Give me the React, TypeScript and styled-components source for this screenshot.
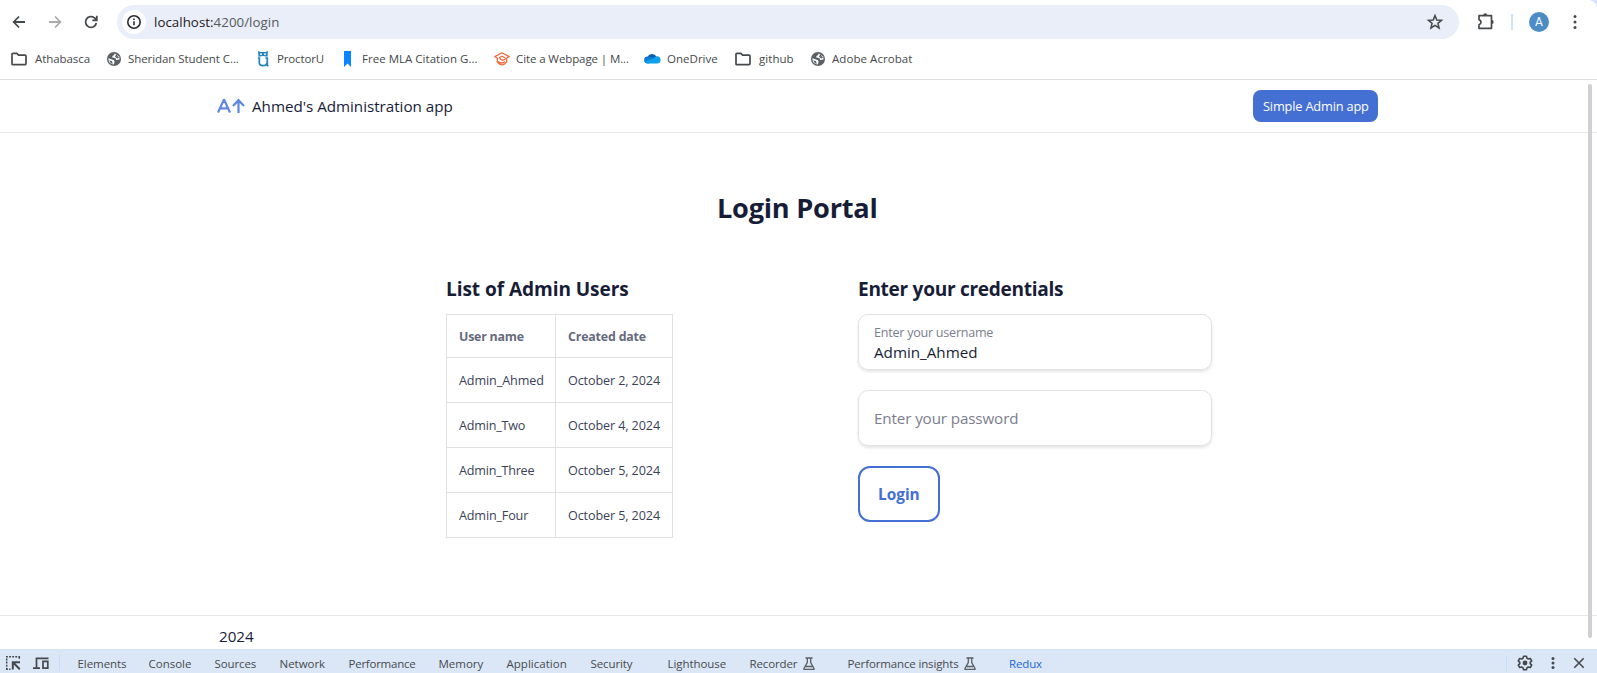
import React from "react";
import styled, { createGlobalStyle } from "styled-components";

const Global = createGlobalStyle`
  *, *::before, *::after { box-sizing: border-box; }
  body { margin: 0; background: #fff; font-family: "Open Sans", "Noto Sans", sans-serif; color: #181d37; overflow: hidden; }
  button { font: inherit; margin: 0; }
`;

const Screen = styled.div`
  width: 1597px;
  height: 673px;
  display: flex;
  flex-direction: column;
  overflow: hidden;
  background: #fff;
`;

/* Text set to a known measure: width plus tracking */
const Text = styled.span<{ $w: number; $size: number; $ls?: number; $bold?: boolean; $color?: string }>`
  display: block;
  flex: none;
  width: ${(p) => p.$w}px;
  font-size: ${(p) => p.$size}px;
  letter-spacing: ${(p) => p.$ls ?? 0}px;
  font-weight: ${(p) => (p.$bold ? 700 : 400)};
  color: ${(p) => p.$color ?? "inherit"};
  white-space: nowrap;
`;

/* ---------- browser toolbar ---------- */
const Toolbar = styled.div`
  position: relative;
  flex: none;
  height: 44px;
  display: flex;
  align-items: center;
  padding: 0 12px 0 9px;
  background: #fff;
`;
const Corner = styled.svg`
  position: absolute;
  top: 0;
  right: 0;
`;
const NavIcons = styled.div`
  display: flex;
  gap: 16px;
  width: 108px;
  svg { display: block; flex: none; }
`;
const Omnibox = styled.div`
  flex: none;
  width: 1342px;
  height: 34px;
  border-radius: 17px;
  background: #e9eef8;
  display: flex;
  align-items: center;
  padding: 0 14px 0 5px;
  line-height: 20px;
  b { font-weight: 400; color: #1f2023; }
`;
const InfoChip = styled.div`
  width: 24px;
  height: 24px;
  border-radius: 50%;
  background: #fff;
  display: grid;
  place-items: center;
  margin-right: 8px;
`;
const Grow = styled.div`
  flex: 1;
`;
const ToolbarEnd = styled.div`
  display: flex;
  align-items: center;
  flex: none;
  padding-left: 17px;
  svg { flex: none; }
`;
const ToolbarRule = styled.i`
  width: 2px;
  height: 16px;
  margin: 0 16px 0 15px;
  background: #cfe2fc;
`;
const Avatar = styled.div`
  width: 20px;
  height: 20px;
  border-radius: 50%;
  background: #4e8cc6;
  color: #fff;
  font: 400 12px/20px Roboto, sans-serif;
  text-align: center;
  margin-right: 18px;
`;

/* ---------- bookmarks ---------- */
const Bookmarks = styled.div`
  flex: none;
  height: 36px;
  display: flex;
  gap: 16px;
  padding: 1px 0 7px 11px;
  border-bottom: 1px solid #dedfe0;
  color: #45484b;
  line-height: 28px;
`;
const Bookmark = styled.div<{ $gap: number }>`
  display: flex;
  align-items: center;
  gap: ${(p) => p.$gap}px;
  svg { flex: none; }
`;

/* ---------- page ---------- */
const Page = styled.div`
  position: relative;
  flex: 1;
  display: flex;
  flex-direction: column;
  min-height: 0;
`;
const ScrollThumb = styled.div`
  position: absolute;
  top: 4px;
  right: 5px;
  width: 4px;
  height: 554px;
  border-radius: 2px;
  background: #cfcfd5;
`;
const Header = styled.header`
  flex: none;
  height: 53px;
  display: flex;
  align-items: center;
  justify-content: space-between;
  padding: 0 219px 0 217px;
  border-bottom: 1px solid #e8e8ea;
`;
const Brand = styled.div`
  display: flex;
  align-items: center;
  gap: 7px;
`;
const PrimaryButton = styled.button`
  width: 125px;
  height: 32px;
  padding: 0 0 0 10px;
  border: 0;
  border-radius: 8px;
  background: #446fd3;
  color: #fff;
  text-align: left;
`;
const Main = styled.main`
  flex: none;
  height: 482px;
  padding-top: 55px;
`;
const Title = styled.h1`
  margin: 0 0 44px 717px;
  line-height: 40px;
`;
const Columns = styled.div`
  display: flex;
  padding-left: 446px;
`;
const Column = styled.section<{ $w: number }>`
  width: ${(p) => p.$w}px;
  flex: none;
`;
const SectionTitle = styled.h2`
  margin: 0 0 8px;
  line-height: 34px;
`;
const Table = styled.table`
  border-collapse: collapse;
  table-layout: fixed;
  width: 227px;
  color: #3b3f57;
  th, td {
    height: 45px;
    border: 1px solid #e0e0e2;
    padding: 2px 0 0 12px;
    text-align: left;
    line-height: 20px;
  }
  th { height: 43px; color: #666a7c; }
`;
const Field = styled.label`
  display: flex;
  flex-direction: column;
  justify-content: center;
  width: 354px;
  height: 56px;
  margin-bottom: 20px;
  padding: 0 15px;
  border: 1px solid #e2e2e4;
  border-radius: 10px;
  box-shadow: 0 2px 3px rgba(0, 0, 0, 0.1);
  line-height: 20px;
`;
const FloatingLabel = styled.div`
  padding-top: 1px;
  height: 20px;
`;
const OutlineButton = styled.button`
  width: 82px;
  height: 56px;
  padding: 1px 0 0 18px;
  border: 2px solid #446fd3;
  border-radius: 12px;
  background: #fff;
  color: #446fd3;
  text-align: left;
`;
const Footer = styled.footer`
  flex: none;
  height: 35px;
  padding: 10px 0 0 219px;
  border-top: 1px solid #e8e8ea;
  line-height: 20px;
`;

/* ---------- devtools ---------- */
const DevTools = styled.div`
  flex: none;
  height: 24px;
  display: flex;
  align-items: flex-start;
  background: #dbe7f6;
  border-top: 1px solid #d0e1f8;
  padding-left: 5px;
  line-height: 27px;
  color: #474a4d;
`;
const DevIcon = styled.svg<{ $top?: number; $right?: number }>`
  flex: none;
  display: block;
  margin-top: ${(p) => p.$top ?? 5}px;
  margin-right: ${(p) => p.$right ?? 0}px;
`;
const DevRule = styled.i<{ $r: number }>`
  width: 1px;
  height: 16px;
  margin: 5px ${(p) => p.$r}px 0 0;
  background: #c7dcf8;
`;
const Tab = styled.div<{ $gap: number }>`
  display: flex;
  gap: 5px;
  margin-right: ${(p) => p.$gap}px;
`;

const ink = "#46494c";

const FolderIcon = () => (
  <svg width="16" height="14" viewBox="0 0 16 14" fill="none" stroke={ink} strokeWidth="1.7" strokeLinejoin="round">
    <path d="M1 12V2.2Q1 1.3 2 1.3H5.8L7.6 3.2H14Q15 3.2 15 4.2V11.5Q15 12.6 14 12.6H2Q1 12.6 1 12Z" />
  </svg>
);
const GlobeIcon = () => (
  <svg width="16" height="16" viewBox="0 0 16 16">
    <circle cx="8" cy="8" r="7" fill="#5c6064" />
    <path d="M8.800 2.400 13.200 5.500 13.500 8.500 10.200 8.900Q10 7 8.400 6.700L6.200 6.400Q6 4.600 7.800 4.300ZM2.500 7.300 6.200 8.600Q8.600 8.900 8.600 10.800L7.800 13.500Q3 13.200 2.500 8.500Z" fill="#fff" />
    <path d="M10.200 3.300 13 6.800 11.200 7.400 9 5.600ZM3.300 9.300 6.200 10.300 6.600 12.900Q4 12 3.300 9.300Z" fill="#5c6064" />
  </svg>
);
const OwlIcon = () => (
  <svg width="16" height="16" viewBox="0 0 16 16" fill="none" stroke="#2384b8">
    <path d="M3 0 5.500 1H10.500L13 0 12.500 5.800 8 5 3.500 5.800Z" fill="#2384b8" stroke="none" />
    <circle cx="6" cy="3.200" r="1.100" fill="#c5e3f1" stroke="none" />
    <circle cx="10" cy="3.200" r="1.100" fill="#c5e3f1" stroke="none" />
    <path d="M3 7H5.300M10.300 7H12.300V14.600H13.500M4.300 7V11.500Q4.300 14.600 8 14.600T12 11.500" strokeWidth="1.700" />
  </svg>
);
const RibbonIcon = () => (
  <svg width="16" height="16" viewBox="0 0 16 16">
    <path d="M4 0H11V16L7.500 12.500 4 16Z" fill="#0a84ff" />
  </svg>
);
const CapIcon = () => (
  <svg width="16" height="14" viewBox="0 0 16 14" fill="none" stroke="#f4683a" strokeWidth="1.250" strokeLinejoin="round">
    <path d="M4.200 6.800 .8 4.600 8 .8 15.200 4.600 9.500 8Q8 8.600 6.500 7.300L5.500 5.500 8 4.200 11 5.800M3.300 7V10.200Q8 15.600 12.700 10.200V7M3.500 9.300Q7.500 12.600 11 9.500" />
  </svg>
);
const CloudIcon = () => (
  <svg width="17" height="11" viewBox="0 0 17 11">
    <path d="M3.500 4A5 5 0 0 1 12.500 3.500L9 8 1 9Z" fill="#0a5fb8" />
    <path d="M3.600 3.500Q6 3 9 5L5 10.400H3.500A3.400 3.400 0 0 1 3.600 3.500Z" fill="#0f7ad4" />
    <path d="M12.500 3.400A3.500 3.500 0 0 1 13.500 10.400H3.500Q2 10.400 1 8.800L9 5.300Q10.500 3.400 12.500 3.400Z" fill="#0fa0ea" />
  </svg>
);
const FlaskIcon = () => (
  <DevIcon $top={7} width="12" height="14" viewBox="0 0 12 14" fill="none" stroke="#5a5e63" strokeWidth="1.300">
    <path d="M2.500 1H9.500M4.300 1V5.500L1 11.500V12.400H11V11.500L7.700 5.500V1M3 9.500H9" />
  </DevIcon>
);

const bookmarks = [
  { icon: <FolderIcon />, label: "Athabasca", w: 55, gap: 8, ls: -0.07 },
  { icon: <GlobeIcon />, label: "Sheridan Student C...", w: 111, gap: 6, ls: -0.07 },
  { icon: <OwlIcon />, label: "ProctorU", w: 47, gap: 6, ls: -0.14 },
  { icon: <RibbonIcon />, label: "Free MLA Citation G...", w: 116, gap: 6, ls: 0.02 },
  { icon: <CapIcon />, label: "Cite a Webpage | M...", w: 112, gap: 6, ls: -0.1 },
  { icon: <CloudIcon />, label: "OneDrive", w: 52, gap: 6, ls: 0.02 },
  { icon: <FolderIcon />, label: "github", w: 35, gap: 8, ls: 0.05 },
  { icon: <GlobeIcon />, label: "Adobe Acrobat", w: 81, gap: 6, ls: 0.06 },
];

const users = [
  { name: "Admin_Ahmed", w: 85, ls: -0.1, date: "October 2, 2024" },
  { name: "Admin_Two", w: 67, ls: -0.2, date: "October 4, 2024" },
  { name: "Admin_Three", w: 76, ls: -0.22, date: "October 5, 2024" },
  { name: "Admin_Four", w: 70, ls: -0.15, date: "October 5, 2024" },
];

const tabs = [
  { label: "Elements", w: 49, gap: 22, ls: -0.06 },
  { label: "Console", w: 43, gap: 23, ls: 0 },
  { label: "Sources", w: 42, gap: 23, ls: -0.1 },
  { label: "Network", w: 46, gap: 23, ls: -0.02 },
  { label: "Performance", w: 67, gap: 23, ls: -0.24 },
  { label: "Memory", w: 45, gap: 23, ls: 0 },
  { label: "Application", w: 61, gap: 23, ls: 0.02 },
  { label: "Security", w: 42, gap: 35, ls: -0.1 },
  { label: "Lighthouse", w: 59, gap: 23, ls: -0.06 },
  { label: "Recorder", w: 48, gap: 33, ls: -0.14, flask: true },
  { label: "Performance insights", w: 111, gap: 33.5, ls: -0.14, flask: true },
  { label: "Redux", w: 33, gap: 0, ls: -0.13, color: "#1a66d8" },
];

export default function App() {
  return (
    <>
      <Global />
      <Screen>
        <Toolbar>
          <Corner width="10" height="8" viewBox="0 0 10 8"><path d="M3 0H10V8Q9.500 2 3 0Z" fill="#d3e3fd" /></Corner>
          <NavIcons>
            <svg width="20" height="20" viewBox="0 0 20 20" fill="none" stroke={ink} strokeWidth="1.800"><path d="M16 10H5M10 4.500 4.700 10 10 15.500" /></svg>
            <svg width="20" height="20" viewBox="0 0 20 20" fill="none" stroke="#a9abad" strokeWidth="1.800"><path d="M4 10H15M10 4.500 15.300 10 10 15.500" /></svg>
            <svg width="20" height="20" viewBox="0 0 20 20" fill="none" stroke={ink} strokeWidth="1.800"><path d="M15.300 11A5.400 5.400 0 1 1 13.800 6.200L15.500 7.900M15.800 3.800V8.300H11.300" /></svg>
          </NavIcons>
          <Omnibox>
            <InfoChip>
              <svg width="16" height="16" viewBox="0 0 16 16" fill="none" stroke="#2b2d30" strokeWidth="1.600"><circle cx="8" cy="8" r="6.200" /><path d="M8 7.200V11.200M8 4.600V6.100" /></svg>
            </InfoChip>
            <Text $w={126} $size={13.3} $ls={0.04} $color="#55595e"><b>localhost:</b>4200/login</Text>
            <Grow />
            <svg width="20" height="20" viewBox="0 0 20 20" fill="none" stroke={ink} strokeWidth="1.500"><path d="M10 3.600 11.800 8 16.500 8.300 12.900 11.300 14.100 16 10 13.400 5.900 16 7.100 11.300 3.500 8.300 8.200 8Z" /></svg>
          </Omnibox>
          <ToolbarEnd>
            <svg width="20" height="20" viewBox="0 0 20 20" fill="none" stroke={ink} strokeWidth="1.700"><path d="M3 3.700H15.500V16.300H3V12.700Q5 12 5 10.200 5 8.300 3 7.600Z" strokeLinejoin="round" /><path d="M7.200 3.500A2 2.200 0 0 1 11.200 3.500ZM15.700 8A2 2 0 0 1 15.700 12Z" fill={ink} stroke="none" /></svg>
            <ToolbarRule />
            <Avatar>A</Avatar>
            <svg width="16" height="16" viewBox="0 0 16 16" fill={ink}><circle cx="8" cy="2.500" r="1.500" /><circle cx="8" cy="8" r="1.500" /><circle cx="8" cy="13.500" r="1.500" /></svg>
          </ToolbarEnd>
        </Toolbar>
        <Bookmarks>
          {bookmarks.map((b) => (
            <Bookmark key={b.label} $gap={b.gap}>{b.icon}<Text $w={b.w} $size={11.5} $ls={b.ls}>{b.label}</Text></Bookmark>
          ))}
        </Bookmarks>
        <Page>
          <ScrollThumb />
          <Header>
            <Brand>
              <svg width="28" height="16" viewBox="0 0 28 16" fill="none" stroke="#5f86e0" strokeWidth="2.200"><path d="M1 14.500 6.700 2H7.300L13 14.500M3 10.300H11M21.500 15V2.500M16 8 21.500 2.200 27 8" /></svg>
              <Text $w={202} $size={15.2} $ls={-0.02}>Ahmed's Administration app</Text>
            </Brand>
            <PrimaryButton><Text $w={106} $size={12.8} $ls={-0.18}>Simple Admin app</Text></PrimaryButton>
          </Header>
          <Main>
            <Title><Text $w={161} $size={27.2} $ls={-0.25} $bold>Login Portal</Text></Title>
            <Columns>
              <Column $w={412}>
                <SectionTitle><Text $w={183} $size={19.1} $ls={-0.08} $bold>List of Admin Users</Text></SectionTitle>
                <Table>
                  <colgroup><col style={{ width: 109 }} /><col /></colgroup>
                  <thead><tr>
                    <th><Text $w={65} $size={12.4} $ls={-0.22} $bold>User name</Text></th>
                    <th><Text $w={78} $size={12.4} $ls={-0.18} $bold>Created date</Text></th>
                  </tr></thead>
                  <tbody>
                    {users.map((u) => (
                      <tr key={u.name}>
                        <td><Text $w={u.w} $size={12.6} $ls={u.ls}>{u.name}</Text></td>
                        <td><Text $w={92} $size={12.6} $ls={-0.11}>{u.date}</Text></td>
                      </tr>
                    ))}
                  </tbody>
                </Table>
              </Column>
              <Column $w={354}>
                <SectionTitle><Text $w={206} $size={19.1} $ls={-0.31} $bold>Enter your credentials</Text></SectionTitle>
                <Field>
                  <FloatingLabel><Text $w={120} $size={12.6} $ls={-0.26} $color="#7b7e8e">Enter your username</Text></FloatingLabel>
                  <Text $w={104} $size={15.2} $ls={0}>Admin_Ahmed</Text>
                </Field>
                <Field><Text $w={145} $size={15.2} $ls={-0.12} $color="#7b7e8e">Enter your password</Text></Field>
                <OutlineButton><Text $w={42} $size={15.4} $bold>Login</Text></OutlineButton>
              </Column>
            </Columns>
          </Main>
          <Footer><Text $w={35} $size={15.2}>2024</Text></Footer>
        </Page>
        <DevTools>
          <DevIcon $right={12} width="16" height="16" viewBox="0 0 16 16" fill="none" stroke={ink} strokeWidth="1.500"><path d="M1 1.800H15M14.300 1.800V5M1 14.200H5.500M1.700 3.500V14" strokeDasharray="1.900 1.200" /><path d="M7.800 14.500V7.300H15M7.800 7.300 14.800 14.300" strokeWidth="2" /></DevIcon>
          <DevIcon $right={10} width="16" height="16" viewBox="0 0 16 16" fill="none" stroke={ink} strokeWidth="1.700"><path d="M15.500 3.300H3.500V13M0 13.200H7" /><path d="M10 6.300H14.800V13.200H10Z" /></DevIcon>
          <DevRule $r={17.5} />
          {tabs.map((t) => (
            <Tab key={t.label} $gap={t.gap}><Text $w={t.w} $size={11.5} $ls={t.ls} $color={t.color}>{t.label}</Text>{t.flask && <FlaskIcon />}</Tab>
          ))}
          <Grow />
          <DevRule $r={10} />
          <DevIcon $right={13} width="16" height="16" viewBox="0 0 16 16" fill="none" stroke={ink} strokeWidth="1.600">
            <path strokeLinejoin="round" d="M6.600 1.300H9.400L10 3.300 11.300 4 13.300 3.500 14.700 5.900 13.200 7.400V8.600L14.700 10.100 13.300 12.500 11.300 12 10 12.700 9.400 14.700H6.600L6 12.700 4.700 12 2.700 12.500 1.300 10.100 2.800 8.600V7.400L1.300 5.900 2.700 3.500 4.700 4 6 3.300Z" />
            <circle cx="8" cy="8" r="2.400" fill={ink} stroke="none" />
          </DevIcon>
          <DevIcon $right={13} width="14" height="16" viewBox="0 0 14 16" fill={ink}><circle cx="7" cy="3.500" r="1.500" /><circle cx="7" cy="8" r="1.500" /><circle cx="7" cy="12.500" r="1.500" /></DevIcon>
          <DevIcon $right={12} width="12" height="16" viewBox="0 0 12 16" fill="none" stroke={ink} strokeWidth="1.600"><path d="M1.300 3.300 10.700 12.700M10.700 3.300 1.300 12.700" /></DevIcon>
        </DevTools>
      </Screen>
    </>
  );
}
